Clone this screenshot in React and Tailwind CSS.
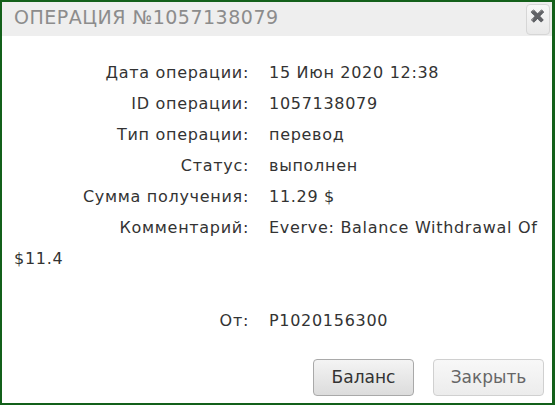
import { useState } from 'react';

const rows = [
  ['Дата операции:', '15 Июн 2020 12:38'],
  ['ID операции:', '1057138079'],
  ['Тип операции:', 'перевод'],
  ['Статус:', 'выполнен'],
  ['Сумма получения:', '11.29 $'],
];

const Label = ({ children }) => (
  <span className="inline-block w-[235px] text-right mr-[20px]">{children}</span>
);

const OperationDialog = () => {
  const [open, setOpen] = useState(true);

  return (
    <div className="w-[555px] h-[405px] bg-white border-2 border-r-[3px] border-[#13601a] flex flex-col overflow-hidden">
      {/* Header */}
      <div className="h-[34px] bg-[#eeeeee] flex items-start justify-between pl-[12px] pr-[2px] shrink-0">
        <h1 className="text-[19px] leading-[30px] tracking-[0.5px] text-[#8c8c8c] font-['DejaVu_Sans',sans-serif] font-normal">
          ОПЕРАЦИЯ №1057138079
        </h1>
        <button
          onClick={() => setOpen(!open)}
          className="mt-[2px] w-[24px] h-[31px] rounded-[4px] border border-[#d6d6d6] bg-gradient-to-b from-[#f7f7f7] to-[#e9e9e9] flex justify-center pt-[4px] text-[#808080] text-[12px] font-bold leading-[14px]"
        >
          ✖
        </button>
      </div>

      {/* Body */}
      <div className="flex-1 px-[12px] pt-[21px] text-[16px] tracking-[0.7px] leading-[31px] text-[#333] font-['DejaVu_Sans',sans-serif]">
        {rows.map(([label, value]) => (
          <div key={label} className="whitespace-nowrap">
            <Label>{label}</Label>
            {value}
          </div>
        ))}
        <p className="whitespace-nowrap">
          <Label>Комментарий:</Label>
          Everve: Balance Withdrawal Of
          <br />
          $11.4
        </p>
        <div className="h-[31px]" />
        <div className="whitespace-nowrap">
          <Label>От:</Label>
          P1020156300
        </div>
      </div>

      {/* Footer */}
      <div className="flex justify-end gap-[19px] pr-[8px] pb-[7px] font-['DejaVu_Sans',sans-serif]">
        <button className="w-[101px] h-[37px] rounded-[4px] border border-[#a9a9a9] bg-gradient-to-b from-[#f4f4f4] to-[#dcdcdc] text-[17px] text-[#333]">
          Баланс
        </button>
        <button className="w-[111px] h-[37px] rounded-[4px] border border-[#d0d0d0] bg-gradient-to-b from-[#f8f8f8] to-[#ececec] text-[17px] text-[#666]">
          Закрыть
        </button>
      </div>
    </div>
  );
};

export default function App() {
  return <OperationDialog />;
}
